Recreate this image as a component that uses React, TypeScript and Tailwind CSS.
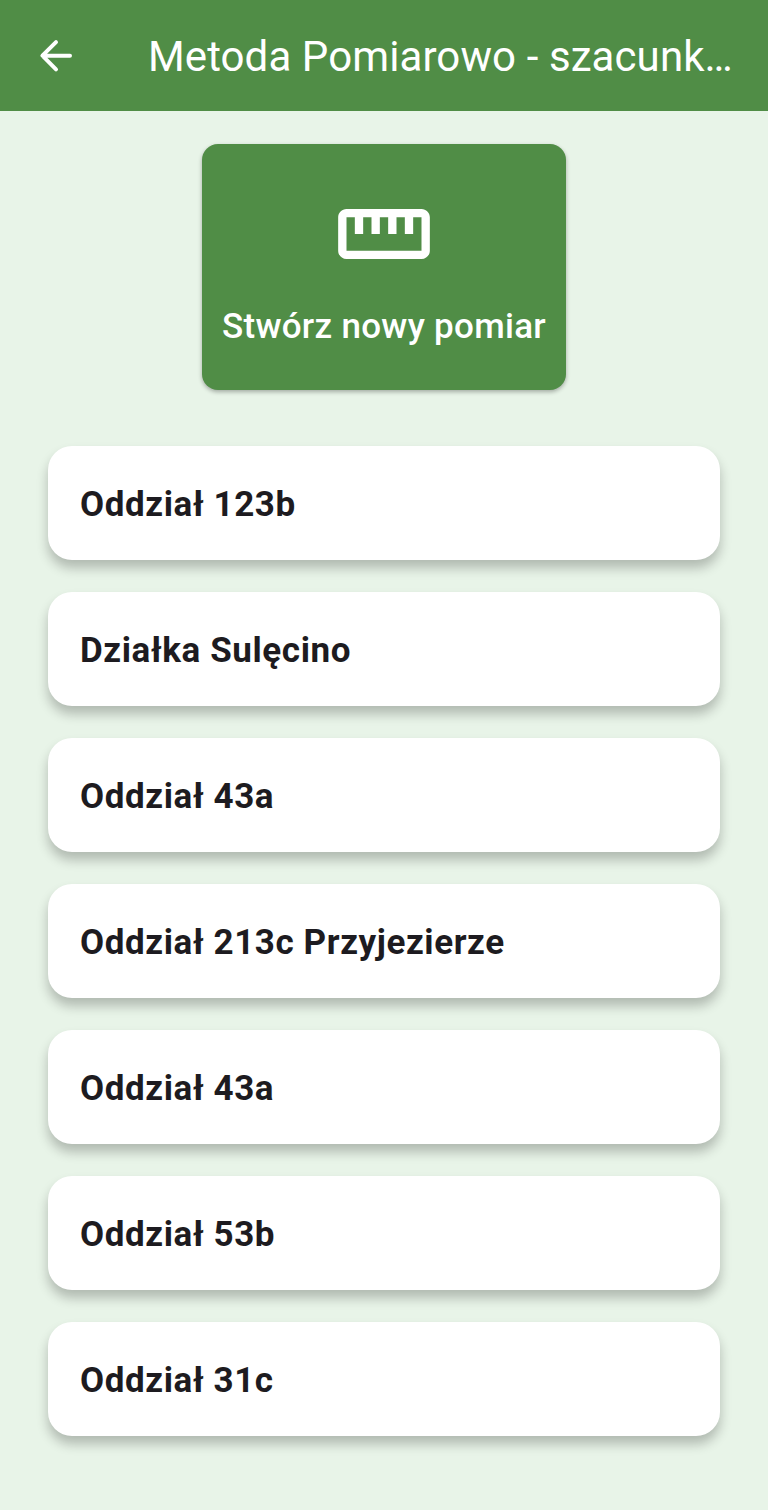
const items = [
  'Oddział 123b',
  'Działka Sulęcino',
  'Oddział 43a',
  'Oddział 213c Przyjezierze',
  'Oddział 43a',
  'Oddział 53b',
  'Oddział 31c',
];

export default function App() {
  return (
    <div className="flex h-[1510px] w-[768px] flex-col overflow-hidden bg-[#e8f4e8] font-['Roboto',sans-serif]">
      <header className="flex h-[111px] shrink-0 items-center bg-[#508d46] text-white">
        <button aria-label="Wstecz" className="ml-8 mr-[68px] shrink-0">
          <svg viewBox="0 0 48 48" className="size-12" fill="none" stroke="currentColor" strokeWidth="4" strokeLinecap="round" strokeLinejoin="round">
            <path d="M38 23.7H10.6M24 10.1L10.4 23.7L24 37.3" />
          </svg>
        </button>
        <h1 className="whitespace-nowrap pt-0.5 text-[42px] leading-[48px] tracking-[0.1px]">Metoda Pomiarowo - szacunk…</h1>
      </header>
      <main className="flex flex-col px-12 pt-[33px]">
        <button className="flex h-[246px] w-[364px] flex-col items-center self-center rounded-2xl bg-[#508d46] pt-[39.5px] text-white shadow-[0_2px_4px_rgba(0,0,0,0.3)]">
          <svg viewBox="0 0 24 24" className="size-[100px]" fill="currentColor">
            <path d="M21 6H3c-1.1 0-2 .9-2 2v8c0 1.1.9 2 2 2h18c1.1 0 2-.9 2-2V8c0-1.1-.9-2-2-2zm0 10H3V8h2v4h2V8h2v4h2V8h2v4h2V8h2v4h2V8h2v8z" />
          </svg>
          <span className="mt-[22px] whitespace-nowrap text-[35px] font-medium leading-[42px] tracking-[0.3px]">Stwórz nowy pomiar</span>
        </button>
        <ul className="mt-14 flex flex-col gap-8">
          {items.map((name, i) => (
            <li key={i} className="flex h-[114px] items-center rounded-3xl bg-white px-8 pt-[3px] text-[35px] font-bold leading-[42px] tracking-[0.59px] text-[#1d1b20] shadow-[0_8px_12px_rgba(0,0,0,0.24)]">
              {name}
            </li>
          ))}
        </ul>
      </main>
    </div>
  );
}
